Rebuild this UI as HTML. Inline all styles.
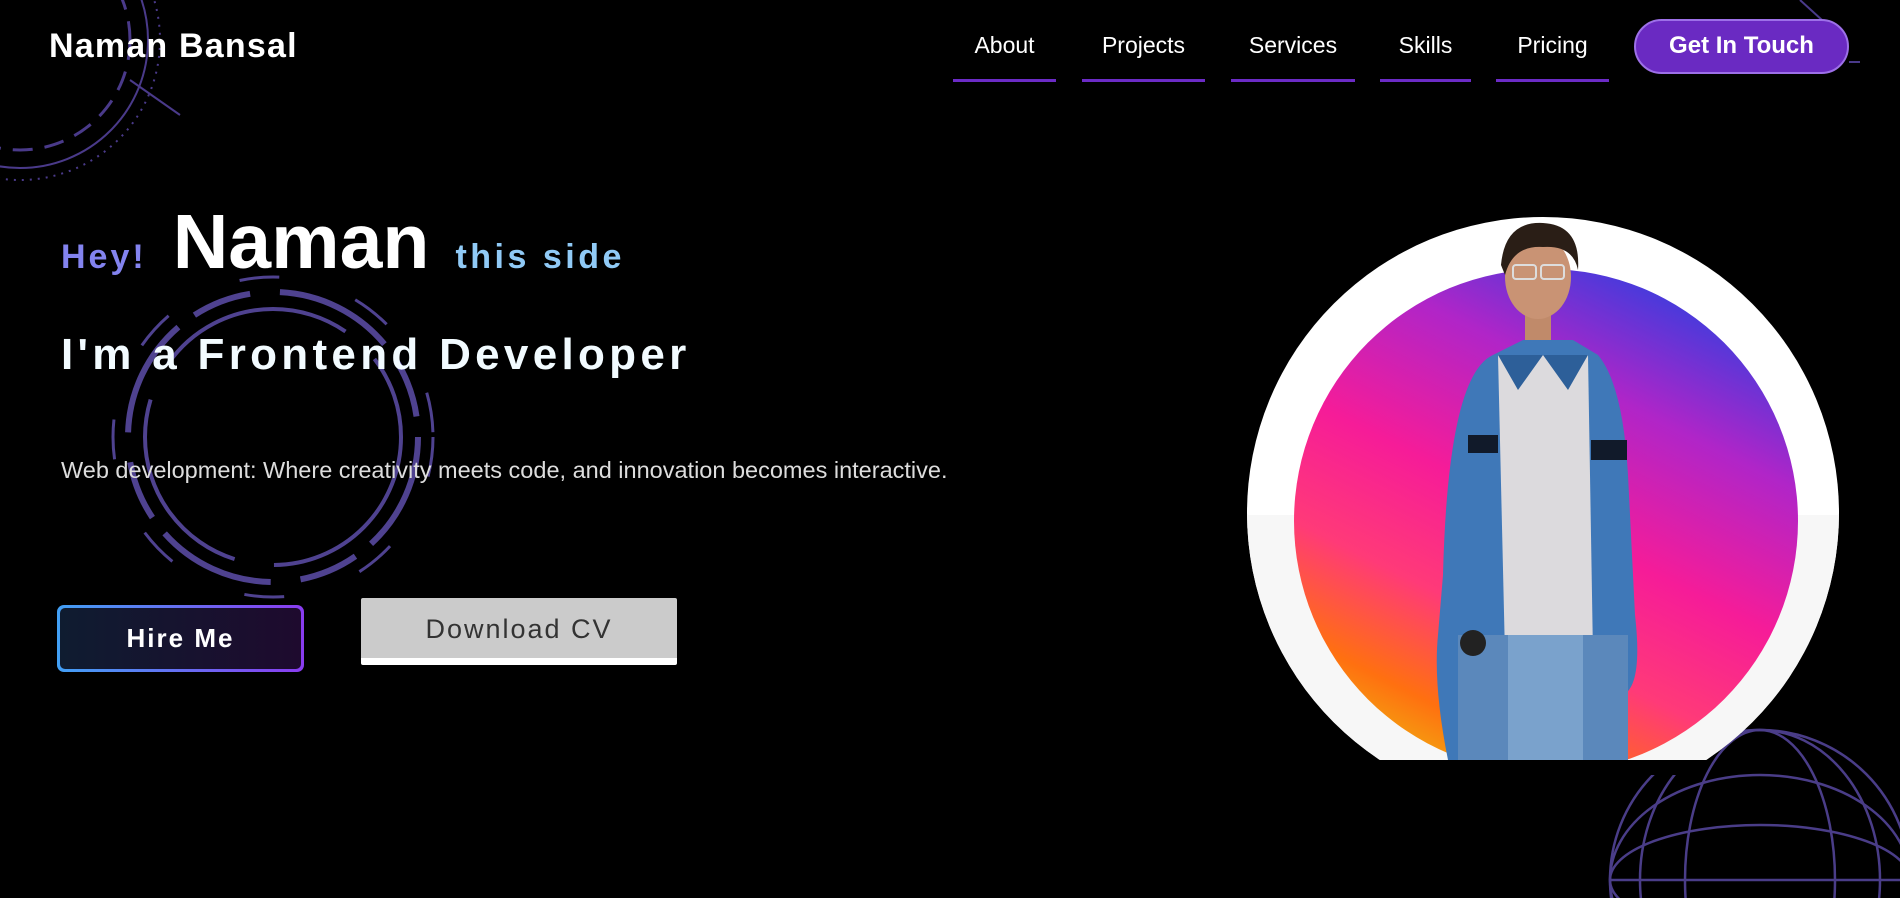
<!DOCTYPE html>
<html><head><meta charset="utf-8">
<style>
*{margin:0;padding:0;box-sizing:border-box}
body{width:1900px;height:898px;background:#000;overflow:hidden;position:relative;font-family:"Liberation Sans",sans-serif;color:#fff}
.logo{position:absolute;left:49px;top:27px;font-size:34px;font-weight:bold;letter-spacing:1.2px}
.nav a{position:absolute;top:32px;font-size:23px;color:#fff;text-decoration:none;text-align:center;height:50px;border-bottom:3px solid #6b2bc6}
.cta{position:absolute;left:1634px;top:19px;width:215px;height:55px;border-radius:28px;background:#6a2ac2;border:2px solid #9d70e8;font-size:24px;font-weight:bold;text-align:center;line-height:50px}
.hey{position:absolute;left:61px;top:198px;white-space:nowrap}
.hey .a{font-size:34px;font-weight:bold;color:#8383ef;letter-spacing:3px}
.hey .b{font-size:77px;font-weight:bold;color:#fff;margin:0 26px 0 26px}
.hey .c{font-size:34px;font-weight:bold;color:#90caf6;letter-spacing:3.5px}
.role{position:absolute;left:61px;top:330px;font-size:44px;font-weight:bold;letter-spacing:4.3px;color:#f2fbff}
.p{position:absolute;left:61px;top:457px;font-size:23.5px;color:#ddd}
.hire{position:absolute;left:57px;top:605px;width:247px;height:67px;border-radius:7px;padding:3px;background:linear-gradient(90deg,#42a0f5,#8a3cf0)}
.hire div{width:100%;height:100%;border-radius:5px;background:linear-gradient(90deg,#0f1c30,#1e0a2e);font-size:26px;font-weight:bold;letter-spacing:2px;text-align:center;line-height:61px}
.dl{position:absolute;left:361px;top:598px;width:316px;height:67px;background:#cbcbcb;border-bottom:7px solid #fff;border-radius:2px;color:#333;font-size:27px;letter-spacing:2px;text-align:center;line-height:62px}
</style></head><body>
<svg width="1900" height="898" style="position:absolute;left:0;top:0" fill="none" stroke="#4a3a8a">
 <g stroke-width="3">
  <circle cx="20" cy="40" r="128" stroke-width="2"/>
  <circle cx="20" cy="40" r="110" stroke-dasharray="20 12"/>
  <circle cx="20" cy="40" r="140" stroke-dasharray="2 6" stroke-width="2"/>
  <line x1="130" y1="80" x2="180" y2="115" stroke-width="2"/>
 </g>
 <g stroke="#4f4290">
  <circle cx="273" cy="437" r="145" stroke-width="6" stroke-dasharray="120 20 60 30"/>
  <circle cx="273" cy="437" r="128" stroke-width="4" stroke-dasharray="200 40"/>
  <circle cx="273" cy="437" r="160" stroke-width="3" stroke-dasharray="40 80"/>
 </g>
 <g stroke="#4a3d88" stroke-width="2.5">
  <circle cx="1760" cy="880" r="150"/>
  <ellipse cx="1760" cy="880" rx="75" ry="150"/>
  <ellipse cx="1760" cy="880" rx="120" ry="150"/>
  <ellipse cx="1760" cy="880" rx="150" ry="55"/>
  <ellipse cx="1760" cy="880" rx="150" ry="105"/>
  <line x1="1610" y1="880" x2="1920" y2="880"/>
 </g>
 <line x1="1800" y1="0" x2="1822" y2="20" stroke="#4a3a8a" stroke-width="2"/>
 <line x1="1849" y1="62" x2="1860" y2="62" stroke="#4a3a8a" stroke-width="2"/>
</svg>
<div class="logo">Naman Bansal</div>
<div class="nav">
 <a style="left:953px;width:103px">About</a>
 <a style="left:1082px;width:123px">Projects</a>
 <a style="left:1231px;width:124px">Services</a>
 <a style="left:1380px;width:91px">Skills</a>
 <a style="left:1496px;width:113px">Pricing</a>
</div>
<div class="cta">Get In Touch</div>
<div class="hey"><span class="a">Hey!</span><span class="b">Naman</span><span class="c">this side</span></div>
<div class="role">I'm a Frontend Developer</div>
<div class="p">Web development: Where creativity meets code, and innovation becomes interactive.</div>
<div class="hire"><div>Hire Me</div></div>
<div class="dl">Download CV</div>
<svg width="600" height="560" style="position:absolute;left:1243px;top:215px">
 <defs>
  <clipPath id="c"><circle cx="300" cy="298" r="296"/></clipPath>
  <linearGradient id="g" x1="0.75" y1="0" x2="0.25" y2="1">
   <stop offset="0" stop-color="#2f3fe0"/>
   <stop offset="0.25" stop-color="#b025c8"/>
   <stop offset="0.5" stop-color="#f61c98"/>
   <stop offset="0.7" stop-color="#ff3a78"/>
   <stop offset="0.88" stop-color="#ff7010"/>
   <stop offset="1" stop-color="#f0b010"/>
  </linearGradient>
 </defs>
 <g clip-path="url(#c)">
  <rect x="0" y="0" width="600" height="545" fill="#fff"/>
  <rect x="0" y="300" width="600" height="245" fill="#f7f7f7"/>
  <circle cx="303" cy="306" r="252" fill="url(#g)"/>
  <rect x="0" y="545" width="600" height="20" fill="#000"/>
  <path d="M200 360 Q205 160 250 140 L280 125 L330 125 L355 140 Q380 170 385 260 L392 400 Q400 470 380 480 L370 545 L205 545 Q190 470 195 420 Z" fill="#3f78b8"/>
  <path d="M255 140 L345 140 L350 440 L262 440 Z" fill="#dcdadd"/>
  <path d="M255 140 L275 175 L300 140 L325 175 L345 140" fill="#2d5f99"/>
  <rect x="225" y="220" width="30" height="18" fill="#111a2a"/>
  <rect x="348" y="225" width="36" height="20" fill="#111a2a"/>
  <rect x="215" y="420" width="170" height="125" fill="#5b88bb"/>
  <rect x="265" y="420" width="75" height="125" fill="#7aa2cc"/>
  <circle cx="230" cy="428" r="13" fill="#222"/>
  <rect x="282" y="85" width="26" height="40" fill="#c08a6a"/>
  <ellipse cx="295" cy="62" rx="33" ry="42" fill="#c99374"/>
  <path d="M258 50 Q262 6 300 8 Q338 10 335 55 Q330 30 300 32 Q270 30 262 60 Z" fill="#2a1e16"/>
  <rect x="270" y="50" width="23" height="14" rx="3" fill="none" stroke="#ddd" stroke-width="2"/>
  <rect x="298" y="50" width="23" height="14" rx="3" fill="none" stroke="#ddd" stroke-width="2"/>
 </g>
</svg>
</body></html>
